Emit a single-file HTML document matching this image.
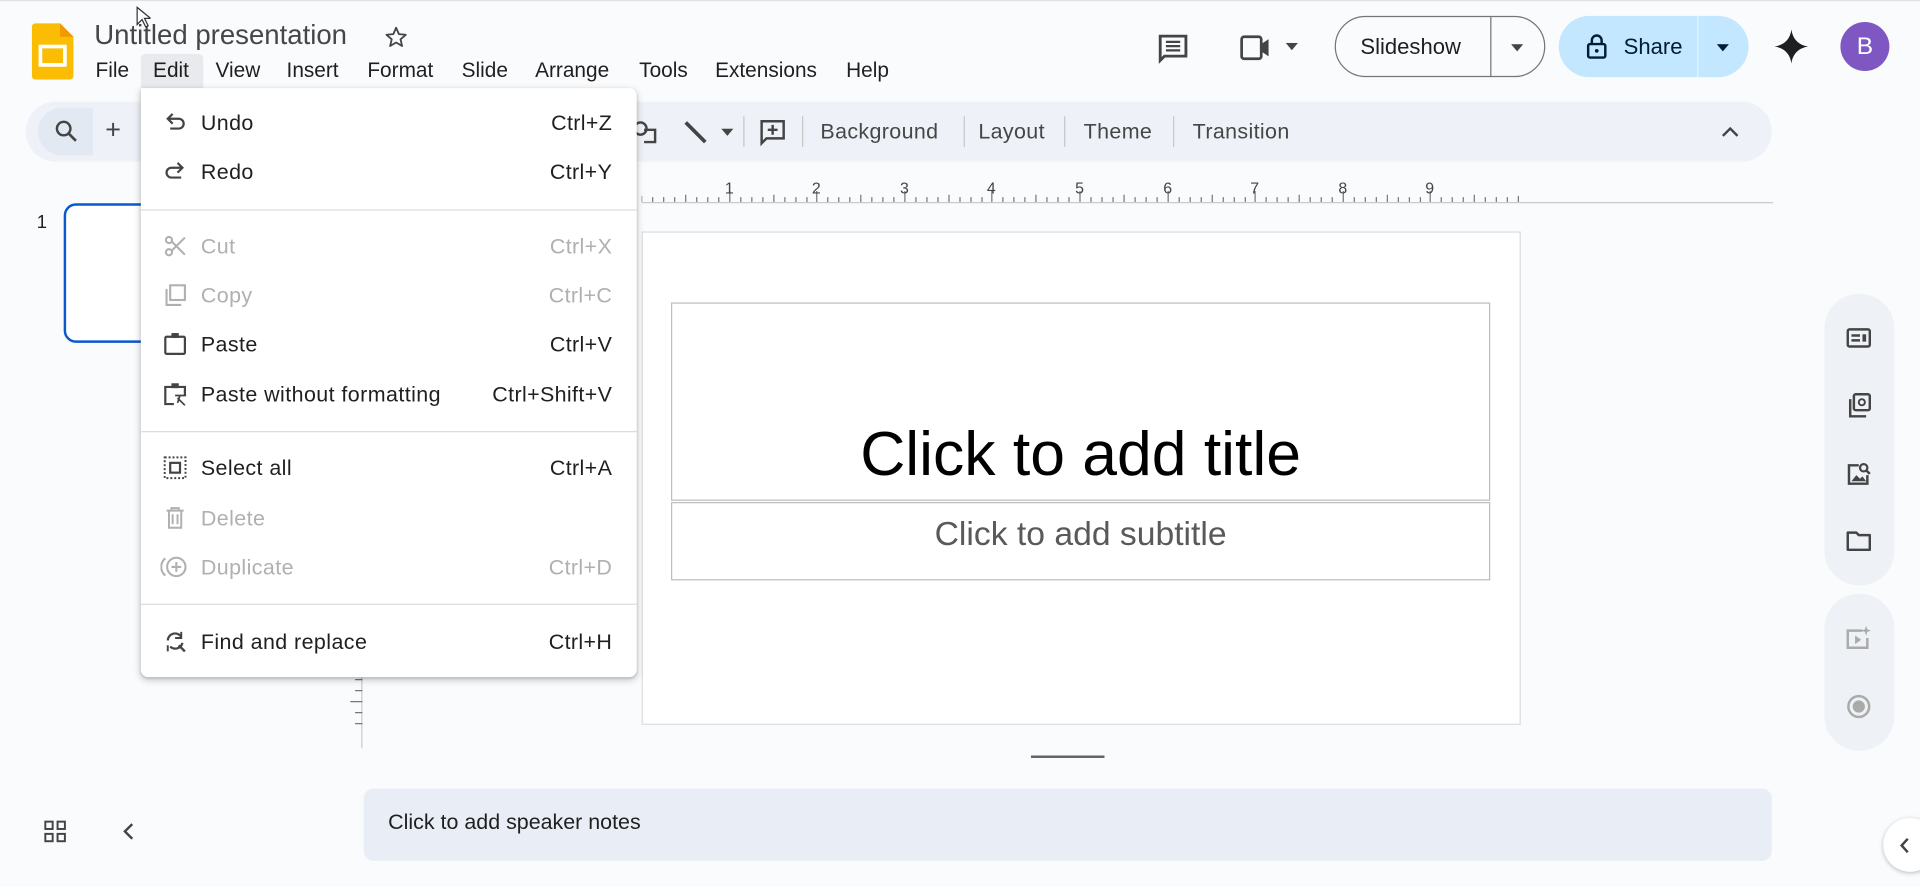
<!DOCTYPE html>
<html><head><meta charset="utf-8">
<style>
html,body{margin:0;padding:0;width:1920px;height:887px;overflow:hidden;background:#f9fbfd;}
#w{position:absolute;left:0;top:0;width:1568px;height:724px;transform:scale(1.22449);transform-origin:0 0;font-family:"Liberation Sans",Arial,sans-serif;color:#1f1f1f;}
.a{position:absolute;}
.t{position:absolute;white-space:nowrap;}
.menu span{position:absolute;top:48px;font-size:17px;color:#1f1f1f;}
.tb{position:absolute;font-size:17.5px;color:#444746;top:97px;letter-spacing:0.3px;}
.dv{position:absolute;top:95px;width:1px;height:25px;background:#c4c7c5;}
.mi{position:absolute;left:0;width:405px;height:36px;}
.mi .l{position:absolute;left:49px;top:8px;font-size:17.5px;letter-spacing:0.35px;}
.mi .s{position:absolute;right:20px;top:8px;font-size:17.5px;letter-spacing:0.3px;}
.mi svg{position:absolute;left:18px;top:8px;}
.dis{color:#b0b0b0;}
.sep{position:absolute;left:0;width:405px;height:1px;background:#dadce0;}
.ri{position:absolute;left:1508px;}
</style></head><body><div id="w">
<div class="a" style="left:0;top:0;width:1568px;height:1px;background:#e1e3e6"></div>
<svg class="a" style="left:26px;top:19px" width="34" height="46" viewBox="0 0 34 46"><path d="M3 0h20l11 11v32a3 3 0 0 1-3 3H3a3 3 0 0 1-3-3V3a3 3 0 0 1 3-3z" fill="#fbbc04"/><path d="M23 0v11h11z" fill="#f29900"/><rect x="7" y="19" width="20" height="15" fill="none" stroke="#fff" stroke-width="3"/></svg>
<div class="t" style="left:77px;top:16px;font-size:22.5px;color:#444746">Untitled presentation</div>
<svg class="a" style="left:313px;top:20px" width="21" height="21" viewBox="0 0 24 24"><path d="M12 3l2.6 6 6.4.6-4.9 4.2 1.5 6.3L12 16.8 6.4 20.1l1.5-6.3L3 9.6 9.4 9z" fill="none" stroke="#444" stroke-width="1.7" stroke-linejoin="round"/></svg>
<div class="a" style="left:115px;top:44px;width:51px;height:28px;background:#e8eaed;border-radius:4px 4px 0 0"></div>
<div class="menu"><span style="left:78px">File</span><span style="left:125px">Edit</span><span style="left:176px">View</span><span style="left:234px">Insert</span><span style="left:300px">Format</span><span style="left:377px">Slide</span><span style="left:437px">Arrange</span><span style="left:522px">Tools</span><span style="left:584px">Extensions</span><span style="left:691px">Help</span></div>
<svg class="a" style="left:944px;top:26px" width="28" height="28" viewBox="0 0 24 24"><path d="M3 3h18v14H6l-3 3z" fill="none" stroke="#444" stroke-width="2"/><path d="M7 7h10M7 10h10M7 13h10" stroke="#444" stroke-width="1.6"/></svg>
<svg class="a" style="left:1012px;top:27px" width="30" height="24" viewBox="0 0 30 24"><rect x="2" y="3" width="16" height="18" rx="2" fill="none" stroke="#444" stroke-width="2.2"/><path d="M18 9l6-4v14l-6-4z" fill="#444"/></svg>
<svg class="a" style="left:1050px;top:35px" width="10" height="6"><path d="M0 0h10L5 6z" fill="#444"/></svg>
<div class="a" style="left:1090px;top:13px;width:172px;height:50px;border:1px solid #747775;border-radius:26px;box-sizing:border-box"></div>
<div class="a" style="left:1217px;top:13px;width:1px;height:50px;background:#747775"></div>
<div class="t" style="left:1111px;top:28px;font-size:18px;color:#1f1f1f">Slideshow</div>
<svg class="a" style="left:1234px;top:36px" width="10" height="6"><path d="M0 0h10L5 6z" fill="#444"/></svg>
<div class="a" style="left:1273px;top:13px;width:155px;height:50px;background:#c2e7ff;border-radius:25px"></div>
<div class="a" style="left:1386px;top:13px;width:1px;height:50px;background:#e6f4ff"></div>
<svg class="a" style="left:1295px;top:27px" width="18" height="22" viewBox="0 0 18 22"><rect x="2" y="9" width="14" height="11" rx="1.5" fill="none" stroke="#001d35" stroke-width="2"/><path d="M5 9V6a4 4 0 0 1 8 0v3" fill="none" stroke="#001d35" stroke-width="2"/><circle cx="9" cy="14.5" r="1.5" fill="#001d35"/></svg>
<div class="t" style="left:1326px;top:28px;font-size:18px;color:#001d35">Share</div>
<svg class="a" style="left:1402px;top:36px" width="10" height="6"><path d="M0 0h10L5 6z" fill="#001d35"/></svg>
<svg class="a" style="left:1449px;top:24px" width="28" height="28" viewBox="0 0 28 28"><path d="M14 0C15 8 20 13 28 14 20 15 15 20 14 28 13 20 8 15 0 14 8 13 13 8 14 0z" fill="#1f1f1f"/></svg>
<div class="a" style="left:1503px;top:18px;width:40px;height:40px;border-radius:50%;background:#7e57c2;color:#fff;font-size:20px;text-align:center;line-height:40px">B</div>
<div class="a" style="left:21px;top:83px;width:1426px;height:49px;background:#eef2f8;border-radius:25px"></div>
<div class="a" style="left:31px;top:88px;width:45px;height:39px;background:#e3e9f2;border-radius:20px 0 0 20px"></div>
<svg class="a" style="left:44px;top:97px" width="20" height="20" viewBox="0 0 20 20"><circle cx="8" cy="8" r="5.5" fill="none" stroke="#444" stroke-width="2"/><path d="M12 12l6 6" stroke="#444" stroke-width="2.2"/></svg>
<div class="t" style="left:86px;top:93px;font-size:22px;color:#444">+</div>
<svg class="a" style="left:516px;top:97px" width="22" height="22" viewBox="0 0 22 22"><circle cx="7" cy="8" r="5" fill="none" stroke="#444" stroke-width="2"/><path d="M10 9h9v10h-9" fill="none" stroke="#444" stroke-width="2"/></svg>
<svg class="a" style="left:557px;top:97px" width="22" height="22"><path d="M3 3l16 16" stroke="#444" stroke-width="3"/></svg>
<svg class="a" style="left:589px;top:105px" width="10" height="6"><path d="M0 0h10L5 6z" fill="#444"/></svg>
<div class="dv" style="left:607px"></div>
<svg class="a" style="left:619px;top:96px" width="24" height="24" viewBox="0 0 24 24"><path d="M3 3h18v14H7l-4 4z" fill="none" stroke="#444" stroke-width="2"/><path d="M12 6v8M8 10h8" stroke="#444" stroke-width="2"/></svg>
<div class="dv" style="left:655px"></div>
<div class="tb" style="left:670px">Background</div>
<div class="dv" style="left:787px"></div>
<div class="tb" style="left:799px">Layout</div>
<div class="dv" style="left:869px"></div>
<div class="tb" style="left:885px">Theme</div>
<div class="dv" style="left:958px"></div>
<div class="tb" style="left:974px">Transition</div>
<svg class="a" style="left:1406px;top:103px" width="14" height="9"><path d="M1 8l6-6 6 6" fill="none" stroke="#444" stroke-width="2"/></svg>
<svg class="a" style="left:524px;top:144px" width="924" height="24">
<line x1="0" y1="21.5" x2="924" y2="21.5" stroke="#c8ccd1"/>
<g stroke="#777" stroke-width="1">
<path d="M0 21v-5M9 21v-4M18 21v-4M27 21v-4M36 21v-6M45 21v-4M54 21v-4M63 21v-4M72 21v-9M81 21v-4M90 21v-4M99 21v-4M108 21v-6M117 21v-4M126 21v-4M135 21v-4M143 21v-9M152 21v-4M161 21v-4M170 21v-4M179 21v-6M188 21v-4M197 21v-4M206 21v-4M215 21v-9M224 21v-4M233 21v-4M242 21v-4M251 21v-6M260 21v-4M269 21v-4M278 21v-4M286 21v-9M295 21v-4M304 21v-4M313 21v-4M322 21v-6M331 21v-4M340 21v-4M349 21v-4M358 21v-9M367 21v-4M376 21v-4M385 21v-4M394 21v-6M403 21v-4M412 21v-4M421 21v-4M430 21v-9M439 21v-4M448 21v-4M457 21v-4M466 21v-6M475 21v-4M484 21v-4M493 21v-4M501 21v-9M510 21v-4M519 21v-4M528 21v-4M537 21v-6M546 21v-4M555 21v-4M564 21v-4M573 21v-9M582 21v-4M591 21v-4M600 21v-4M609 21v-6M618 21v-4M627 21v-4M636 21v-4M644 21v-9M653 21v-4M662 21v-4M671 21v-4M680 21v-6M689 21v-4M698 21v-4M707 21v-4M716 21v-5"/></g>
<g font-size="13" fill="#444" font-family="Liberation Sans">
<text x="68" y="14">1</text><text x="139" y="14">2</text><text x="211" y="14">3</text><text x="282" y="14">4</text><text x="354" y="14">5</text><text x="426" y="14">6</text><text x="497" y="14">7</text><text x="569" y="14">8</text><text x="640" y="14">9</text></g></svg>
<div class="a" style="left:295px;top:165px;width:1px;height:446px;background:#c8ccd1"></div>
<svg class="a" style="left:286px;top:550px" width="10" height="60"><path d="M4 5h6M4 14h6M0 23h10M4 32h6M4 41h6" stroke="#777"/></svg>
<div class="t" style="left:30px;top:173px;font-size:15px;color:#1f1f1f">1</div>
<div class="a" style="left:52px;top:166px;width:220px;height:114px;border:2.5px solid #0b57d0;border-radius:10px;box-sizing:border-box;background:#fff"></div>
<div class="a" style="left:524px;top:189px;width:718px;height:403px;background:#fff;border:1px solid #dadce0;box-sizing:border-box"></div>
<div class="a" style="left:548px;top:247px;width:669px;height:162px;border:1px solid #bdbdbd;box-sizing:border-box"></div>
<div class="t" style="left:548px;top:341px;width:669px;text-align:center;font-size:51px;color:#000">Click to add title</div>
<div class="a" style="left:548px;top:410px;width:669px;height:64px;border:1px solid #bdbdbd;box-sizing:border-box"></div>
<div class="t" style="left:548px;top:420px;width:669px;text-align:center;font-size:27.5px;color:#595959">Click to add subtitle</div>
<div class="a" style="left:842px;top:617px;width:60px;height:2px;background:#5f6368"></div>
<div class="a" style="left:297px;top:644px;width:1150px;height:59px;background:#e9eef6;border-radius:8px"></div>
<div class="t" style="left:317px;top:661px;font-size:17.5px;color:#1f1f1f">Click to add speaker notes</div>
<svg class="a" style="left:36px;top:670px" width="18" height="18" viewBox="0 0 18 18"><g fill="none" stroke="#444" stroke-width="1.6"><rect x="1" y="1" width="6" height="6"/><rect x="11" y="1" width="6" height="6"/><rect x="1" y="11" width="6" height="6"/><rect x="11" y="11" width="6" height="6"/></g></svg>
<svg class="a" style="left:100px;top:672px" width="10" height="14"><path d="M8 1L2 7l6 6" fill="none" stroke="#444" stroke-width="2"/></svg>
<div class="a" style="left:1490px;top:240px;width:57px;height:238px;background:#eef1f6;border-radius:28px"></div>
<div class="a" style="left:1490px;top:485px;width:57px;height:128px;background:#eef1f6;border-radius:28px"></div>
<svg class="ri" style="top:266px" width="20" height="20" viewBox="0 0 20 20"><rect x="1" y="3" width="18" height="14" rx="1.5" fill="none" stroke="#444" stroke-width="2"/><path d="M4 8h7M4 12h7" stroke="#444" stroke-width="2"/><rect x="13" y="7" width="3" height="6" fill="#444"/></svg>
<svg class="ri" style="top:321px" width="20" height="20" viewBox="0 0 20 20"><rect x="6" y="1" width="13" height="13" rx="1.5" fill="none" stroke="#444" stroke-width="2"/><circle cx="12.5" cy="7.5" r="2.5" fill="none" stroke="#444" stroke-width="1.6"/><path d="M3 5v14h13" fill="none" stroke="#444" stroke-width="2"/></svg>
<svg class="ri" style="top:377px" width="20" height="20" viewBox="0 0 20 20"><path d="M10 3H2v15h15v-7" fill="none" stroke="#444" stroke-width="2"/><path d="M4 16l4-5 3 3 2-2 3 4z" fill="#444"/><circle cx="14" cy="5" r="3" fill="none" stroke="#444" stroke-width="1.8"/><path d="M16 7l3 3" stroke="#444" stroke-width="2"/></svg>
<svg class="ri" style="top:432px" width="20" height="20" viewBox="0 0 20 20"><path d="M1 3h7l2 2h9v12H1z" fill="none" stroke="#444" stroke-width="2" stroke-linejoin="round"/></svg>
<svg class="ri" style="top:511px" width="20" height="20" viewBox="0 0 20 20"><path d="M13 4H1v14h16v-8" fill="none" stroke="#aaa" stroke-width="2"/><path d="M7 8v7l5-3.5z" fill="#aaa"/><path d="M16 0l1 3 3 1-3 1-1 3-1-3-3-1 3-1z" fill="#aaa"/></svg>
<svg class="ri" style="top:567px" width="20" height="20" viewBox="0 0 20 20"><circle cx="10" cy="10" r="8.5" fill="none" stroke="#aaa" stroke-width="2"/><circle cx="10" cy="10" r="5" fill="#aaa"/></svg>
<div class="a" style="left:1538px;top:668px;width:44px;height:44px;border-radius:50%;background:#fff;box-shadow:0 1px 4px rgba(0,0,0,.25)"></div>
<svg class="a" style="left:1551px;top:684px" width="9" height="13"><path d="M7 1L2 6.5 7 12" fill="none" stroke="#444" stroke-width="2"/></svg>
<div class="a" style="left:115px;top:72px;width:405px;height:481px;background:#fff;border-radius:0 6px 6px 6px;box-shadow:0 2px 6px rgba(0,0,0,.22),0 1px 2px rgba(0,0,0,.15)">
<div class="mi" style="top:10px"><svg width="20" height="20" viewBox="0 0 20 20"><path d="M5 7h8a4 4 0 0 1 0 8H6" fill="none" stroke="#444" stroke-width="1.8"/><path d="M8 3L4 7l4 4" fill="none" stroke="#444" stroke-width="1.8"/></svg><span class="l">Undo</span><span class="s">Ctrl+Z</span></div>
<div class="mi" style="top:50px"><svg width="20" height="20" viewBox="0 0 20 20"><path d="M15 7H7a4 4 0 0 0 0 8h8" fill="none" stroke="#444" stroke-width="1.8"/><path d="M12 3l4 4-4 4" fill="none" stroke="#444" stroke-width="1.8"/></svg><span class="l">Redo</span><span class="s">Ctrl+Y</span></div>
<div class="sep" style="top:99px"></div>
<div class="mi dis" style="top:111px"><svg width="20" height="20" viewBox="0 0 20 20"><circle cx="5" cy="5" r="2.5" fill="none" stroke="#b0b0b0" stroke-width="1.7"/><circle cx="5" cy="15" r="2.5" fill="none" stroke="#b0b0b0" stroke-width="1.7"/><path d="M7 6l11 11M7 14L18 3" stroke="#b0b0b0" stroke-width="1.7"/></svg><span class="l">Cut</span><span class="s">Ctrl+X</span></div>
<div class="mi dis" style="top:151px"><svg width="20" height="20" viewBox="0 0 20 20"><rect x="6" y="2" width="12" height="12" fill="none" stroke="#b0b0b0" stroke-width="1.7"/><path d="M3 5v13h12" fill="none" stroke="#b0b0b0" stroke-width="1.7"/></svg><span class="l">Copy</span><span class="s">Ctrl+C</span></div>
<div class="mi" style="top:191px"><svg width="20" height="20" viewBox="0 0 20 20"><rect x="2" y="4" width="16" height="14" rx="1" fill="none" stroke="#444" stroke-width="1.8"/><rect x="7" y="1" width="6" height="4" fill="#444"/></svg><span class="l">Paste</span><span class="s">Ctrl+V</span></div>
<div class="mi" style="top:232px"><svg width="20" height="20" viewBox="0 0 20 20"><path d="M9 18H2V4h16v7" fill="none" stroke="#444" stroke-width="1.8"/><rect x="7" y="1" width="6" height="4" fill="#444"/><path d="M10 11h9M12 13l6 6M14 11l-2 6" stroke="#444" stroke-width="1.4"/></svg><span class="l">Paste without formatting</span><span class="s">Ctrl+Shift+V</span></div>
<div class="sep" style="top:280px"></div>
<div class="mi" style="top:292px"><svg width="20" height="20" viewBox="0 0 20 20"><rect x="1.5" y="1.5" width="17" height="17" fill="none" stroke="#444" stroke-width="1.6" stroke-dasharray="1.6 1.6"/><rect x="6" y="6" width="8" height="8" fill="none" stroke="#444" stroke-width="1.8"/></svg><span class="l">Select all</span><span class="s">Ctrl+A</span></div>
<div class="mi dis" style="top:333px"><svg width="20" height="20" viewBox="0 0 20 20"><path d="M3 4h14M7 4V2h6v2M5 4v14h10V4M8 7v8M12 7v8" fill="none" stroke="#b0b0b0" stroke-width="1.6"/></svg><span class="l">Delete</span><span class="s"></span></div>
<div class="mi dis" style="top:373px"><svg width="22" height="20" viewBox="0 0 22 20" style="left:16px"><circle cx="13" cy="10" r="7.5" fill="none" stroke="#b0b0b0" stroke-width="1.7"/><path d="M4 3a9 9 0 0 0 0 14M13 6v8M9 10h8" fill="none" stroke="#b0b0b0" stroke-width="1.7"/></svg><span class="l">Duplicate</span><span class="s">Ctrl+D</span></div>
<div class="sep" style="top:421px"></div>
<div class="mi" style="top:434px"><svg width="20" height="20" viewBox="0 0 20 20"><path d="M4 9a6 6 0 0 1 11-3M16 11a6 6 0 0 1-10 3" fill="none" stroke="#444" stroke-width="1.8"/><path d="M15 2v5h-5M4 13v5" fill="none" stroke="#444" stroke-width="1.6"/><path d="M13 13l5 5" stroke="#444" stroke-width="2"/></svg><span class="l">Find and replace</span><span class="s">Ctrl+H</span></div>
</div>
<svg class="a" style="left:111px;top:5px" width="12" height="18"><path d="M1 1v14l4-4 3 6 2-1-3-6h5z" fill="#fff" stroke="#333" stroke-width="1"/></svg>
</div></body></html>
